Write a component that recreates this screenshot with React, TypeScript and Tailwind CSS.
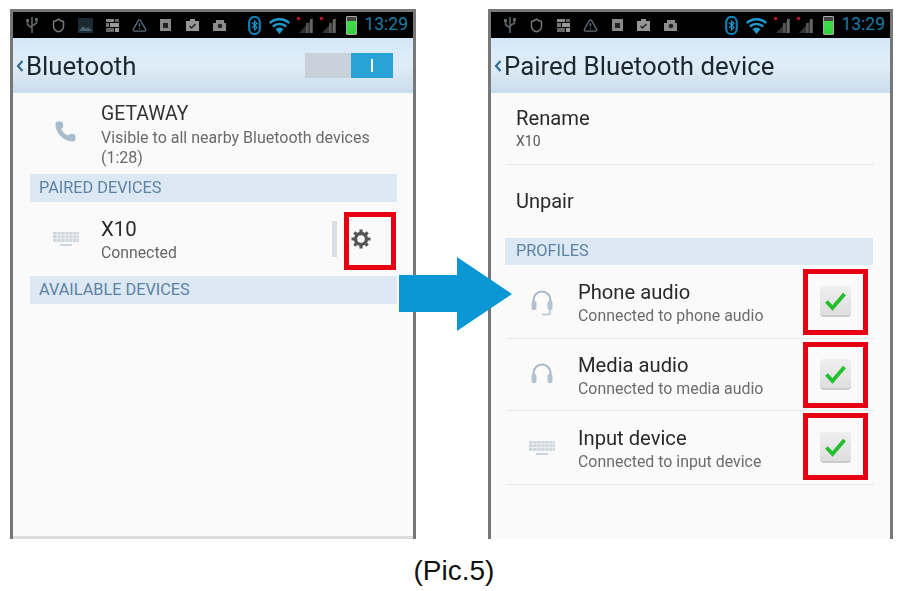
import React from 'react';
import { Shield, TriangleAlert, Phone } from 'lucide-react';

const Cell = ({ children }: { children: React.ReactNode }) => (
    <div className="w-[26.8px] flex justify-center items-center shrink-0">{children}</div>
);

const UsbIcon = () => (
    <svg width="14" height="18" viewBox="0 0 14 18" fill="none" stroke="#5f6467" strokeWidth="1.6">
        <path d="M7 1v16M7 12L2.500 8.500V5M7 10l4.500-3V4" />
        <rect x="1" y="3" width="3" height="3" fill="#5f6467" stroke="none" />
        <rect x="10" y="2" width="3" height="3" fill="#5f6467" stroke="none" />
    </svg>
);

const WifiIcon = () => (
    <svg width="23" height="17" viewBox="0 0 23 17">
        <path d="M1 5a16 16 0 0 1 21 0l-1.500 2a13 13 0 0 0-18 0z" fill="#1f9bcb" />
        <path d="M4 8.600a11 11 0 0 1 15 0l-1.600 2a8 8 0 0 0-11.800 0z" fill="#1f9bcb" />
        <path d="M7.500 12a6 6 0 0 1 8 0l-4 5z" fill="#1f9bcb" />
    </svg>
);

const BluetoothPill = () => (
    <svg width="13" height="19" viewBox="0 0 13 19" fill="none">
        <rect x="1.200" y="1" width="10.600" height="17" rx="5" stroke="#0f7fb5" strokeWidth="2.200" />
        <path d="M4 6.500l5 5-2.500 2.500V5l2.500 2.500-5 4.500" stroke="#1a9ad0" strokeWidth="1.100" />
    </svg>
);

const Bars = () => (
    <svg width="20" height="20" viewBox="0 0 20 20">
        <path d="M18 3v15H4z" fill="#333" />
        <rect x="11" y="8" width="2.500" height="10" fill="#555" />
        <rect x="15" y="4" width="2.500" height="14" fill="#666" />
        <circle cx="3.500" cy="3.500" r="1.700" fill="#c4122a" />
    </svg>
);

const StatusBar = ({ hasImage }: { hasImage: boolean }) => (
    <div className="h-[26px] bg-black flex items-center pl-[5.5px] shrink-0">
        <Cell><UsbIcon /></Cell>
        <Cell><Shield className="w-[15px] h-[15px] text-[#77797b]" strokeWidth={2.4} /></Cell>
        {hasImage && (
            <Cell>
                <svg width="15" height="15" viewBox="0 0 15 15">
                    <rect width="15" height="15" fill="#1c2a33" />
                    <path d="M1 13l4-5 3 3 2-2 4 4z" fill="#4a6475" />
                </svg>
            </Cell>
        )}
        <Cell>
            <div className="w-[13px] h-[13px] grid grid-cols-3 gap-[1px]">
                <div className="bg-[#8a8a8a] col-span-2" /><div className="bg-[#666]" />
                <div className="bg-[#777]" /><div className="bg-[#999] col-span-2" />
                <div className="bg-[#666] col-span-2" /><div className="bg-[#999]" />
            </div>
        </Cell>
        <Cell><TriangleAlert className="w-[15px] h-[15px] text-[#5f6f7a]" strokeWidth={2.2} /></Cell>
        <Cell>
            <div className="w-[11px] h-[12px] bg-[#888] flex items-center justify-center">
                <div className="w-[5px] h-[5px] bg-[#222]" />
            </div>
        </Cell>
        <Cell>
            <svg width="15" height="14" viewBox="0 0 15 14">
                <path d="M1 3h4V1h5v2h4v10H1z" fill="#969696" />
                <path d="M4.500 8l2 2 4-4" fill="none" stroke="#222" strokeWidth="1.500" />
            </svg>
        </Cell>
        <Cell>
            <svg width="15" height="13" viewBox="0 0 15 13">
                <path d="M1 4h3V1h8v3h2v8H1z" fill="#8c8c8c" />
                <circle cx="8" cy="7" r="2.300" fill="#222" />
            </svg>
        </Cell>
        <div className="ml-auto flex items-center pr-[5px]">
            <div className="w-[24px] flex justify-center"><BluetoothPill /></div>
            <div className="w-[27px] flex justify-center"><WifiIcon /></div>
            <div className="w-[23px] flex justify-center"><Bars /></div>
            <div className="w-[23px] flex justify-center"><Bars /></div>
            <div className="w-[24px] flex justify-center">
                <div className="w-[11px] h-[19px] rounded-[1px] border border-[#aaa] bg-[linear-gradient(#444_0%,#444_22%,#3fdc48_22%,#35d13f_100%)]" />
            </div>
            <span className="w-[45px] text-[17.5px] text-[#1c7da6] text-right leading-none">13:29</span>
        </div>
    </div>
);

const Header = ({ title, children }: { title: string; children?: React.ReactNode }) => (
    <div className="h-[55px] shrink-0 flex items-center bg-[linear-gradient(#d4e7f7_0%,#e0edf7_50%,#c9dcec_100%)]">
        <svg className="ml-[3px] shrink-0" width="8" height="12" viewBox="0 0 8 12">
            <path d="M6.500 1L2 6l4.500 5" fill="none" stroke="#356c98" strokeWidth="2.200" />
        </svg>
        <span className="text-[25.8px] leading-none text-[#1c2830] ml-[2px] pt-[2px]">{title}</span>
        {children}
    </div>
);

const Section = ({ label, className }: { label: string; className: string }) => (
    <div className={`bg-[#dce8f3] flex items-center text-[16.3px] text-[#5e82a3] pl-[9px] leading-none shrink-0 ${className}`}>
        {label}
    </div>
);

const KeyboardIcon = () => (
    <svg width="28" height="16" viewBox="0 0 28 16">
        <rect x="1" y="1" width="26" height="10" fill="#cfd6dc" />
        <path d="M1 4h26M1 7.500h26M5 1v10M9 1v10M13 1v10M17 1v10M21 1v10M25 1v10" stroke="#eef1f3" strokeWidth="0.900" />
        <path d="M8 14h12" stroke="#c2cbd3" strokeWidth="1.600" />
    </svg>
);

const HeadsetIcon = ({ mic }: { mic: boolean }) => (
    <svg width="24" height="28" viewBox="0 0 24 28" fill="none">
        <path d="M3.500 15v-3a8.500 8.500 0 0 1 17 0v3" stroke="#a9b8c8" strokeWidth="2" />
        <rect x="1.500" y="13" width="5" height="9" rx="2" fill="#b3c1d0" />
        <rect x="17.500" y="13" width="5" height="9" rx="2" fill="#b3c1d0" />
        {mic && <path d="M20 22v2.500a2 2 0 0 1-2 2h-6" stroke="#b3c1d0" strokeWidth="1.500" />}
    </svg>
);

const GearIcon = () => (
    <svg width="22" height="22" viewBox="0 0 22 22" fill="none" stroke="#555">
        <circle cx="11" cy="11" r="5.500" strokeWidth="3.400" />
        <path d="M11 1.500v3M11 17.500v3M1.500 11h3M17.500 11h3M4.300 4.300l2.100 2.100M15.600 15.600l2.100 2.100M4.300 17.700l2.100-2.100M15.600 6.400l2.100-2.100" strokeWidth="3.200" />
    </svg>
);

const CheckBox = () => (
    <div className="w-[31px] h-[31px] rounded-[4px] bg-[linear-gradient(#efefef,#dedede)] border-b-2 border-[#cbcbcb] flex items-center justify-center shrink-0">
        <svg width="23" height="20" viewBox="0 0 23 20" fill="none">
            <path d="M2.500 10.500l6 6.500L20.500 3" stroke="#22c02c" strokeWidth="3.800" />
        </svg>
    </div>
);

const ProfileRow = ({ icon, title, sub, className }: { icon: React.ReactNode; title: string; sub: string; className: string }) => (
    <div className={`flex items-center mx-[16px] border-b border-[#e6e8ea] shrink-0 ${className}`}>
        <div className="w-[71px] flex justify-center shrink-0 pr-[1px]">{icon}</div>
        <div className="flex flex-col pt-[4px]">
            <span className="text-[20.2px] leading-[24px] text-[#2a2a2a]">{title}</span>
            <span className="text-[15.9px] leading-[24px] text-[#6c6c6c]">{sub}</span>
        </div>
        <div className="ml-auto mr-[23px]"><CheckBox /></div>
    </div>
);

const RedBox = ({ className }: { className: string }) => (
    <div className={`absolute border-[5px] border-[#e60012] ${className}`} />
);

export default function App() {
    return (
        <div className="relative w-[908px] h-[591px] bg-white overflow-hidden font-['Roboto',sans-serif]">
            <div className="flex pt-[9px] pl-[10px] gap-[72px]">
                {/* Left phone */}
                <div className="w-[406px] h-[530px] border-x-[3px] border-t-[3px] border-[#777] bg-[#fafafa] flex flex-col overflow-hidden">
                    <div className="flex flex-col h-full blur-[0.4px]">
                        <StatusBar hasImage />
                        <Header title="Bluetooth">
                            <div className="ml-auto mr-[20px] w-[88px] h-[25px] flex">
                                <div className="w-[46px] bg-[#c9d2da]" />
                                <div className="flex-1 bg-[#29a3d6] flex items-center justify-center">
                                    <div className="w-[2px] h-[13px] bg-white" />
                                </div>
                            </div>
                        </Header>
                        <div className="h-[81px] flex items-start shrink-0">
                            <div className="w-[88px] flex justify-center pt-[27px] shrink-0 pl-[17px]">
                                <Phone className="w-[23px] h-[23px] text-[#a9bccb]" fill="#a9bccb" strokeWidth={1} />
                            </div>
                            <div className="flex flex-col pt-[9px]">
                                <span className="text-[19.4px] leading-[24px] text-[#333]">GETAWAY</span>
                                <span className="text-[16px] leading-[20px] text-[#6a6a6a] pt-[2px]">Visible to all nearby Bluetooth devices</span>
                                <span className="text-[16px] leading-[19px] text-[#6a6a6a]">(1:28)</span>
                            </div>
                        </div>
                        <Section label="PAIRED DEVICES" className="ml-[17px] w-[367px] h-[28px]" />
                        <div className="h-[74px] flex items-center shrink-0">
                            <div className="w-[88px] flex justify-center shrink-0 pl-[17px]"><KeyboardIcon /></div>
                            <div className="flex flex-col">
                                <span className="text-[20.4px] leading-[28px] text-[#2a2a2a]">X10</span>
                                <span className="text-[15.8px] leading-[20px] text-[#666]">Connected</span>
                            </div>
                            <div className="ml-auto w-[5px] h-[36px] bg-[#dcdfe1] mr-[13px]" />
                            <div className="mr-[41px]"><GearIcon /></div>
                        </div>
                        <Section label="AVAILABLE DEVICES" className="ml-[17px] w-[367px] h-[28px]" />
                        <div className="flex-1" />
                        <div className="h-[3px] bg-[#dcdcdc] shrink-0" />
                    </div>
                </div>

                {/* Right phone */}
                <div className="w-[405px] h-[530px] border-x-[3px] border-t-[3px] border-[#777] bg-[#fafafa] flex flex-col overflow-hidden">
                    <div className="flex flex-col h-full blur-[0.4px]">
                        <StatusBar hasImage={false} />
                        <Header title="Paired Bluetooth device" />
                        <div className="h-[72px] flex flex-col mx-[16px] border-b border-[#e6e8ea] pl-[9px] pt-[13px] shrink-0">
                            <span className="text-[20.2px] leading-[24px] text-[#2a2a2a]">Rename</span>
                            <span className="text-[14px] leading-[22px] text-[#555]">X10</span>
                        </div>
                        <div className="h-[73px] flex items-center mx-[16px] pl-[9px] pb-[2px] shrink-0">
                            <span className="text-[20px] text-[#2a2a2a]">Unpair</span>
                        </div>
                        <Section label="PROFILES" className="ml-[14px] w-[368px] h-[27px] pl-[11px]" />
                        <ProfileRow className="h-[74px]" title="Phone audio" sub="Connected to phone audio" icon={<HeadsetIcon mic />} />
                        <ProfileRow className="h-[72px]" title="Media audio" sub="Connected to media audio" icon={<HeadsetIcon mic={false} />} />
                        <ProfileRow className="h-[74px]" title="Input device" sub="Connected to input device" icon={<KeyboardIcon />} />
                    </div>
                </div>
            </div>

            <div className="text-center text-[28px] leading-none text-[#111] font-['Liberation_Sans',sans-serif] pt-[18px]">(Pic.5)</div>

            {/* annotations */}
            <RedBox className="left-[344px] top-[212px] w-[52px] h-[58px]" />
            <RedBox className="left-[803px] top-[269px] w-[65px] h-[66px]" />
            <RedBox className="left-[803px] top-[342px] w-[65px] h-[66px]" />
            <RedBox className="left-[803px] top-[413px] w-[65px] h-[67px]" />
            <svg className="absolute left-[399px] top-[257px]" width="114" height="74" viewBox="0 0 114 74">
                <path d="M0 18h58V0l55 37-55 37V55H0z" fill="#0b96d4" />
            </svg>
        </div>
    );
}
